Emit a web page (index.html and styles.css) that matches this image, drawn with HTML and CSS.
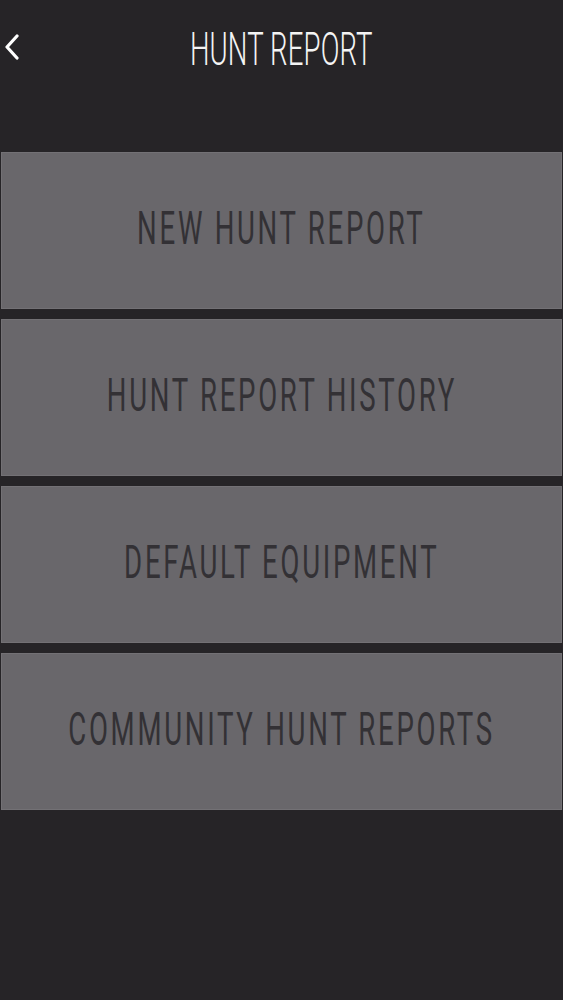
FILE: index.html
```html
<!DOCTYPE html>
<html>
<head>
<meta charset="utf-8">
<link rel="stylesheet" href="styles.css">
</head>
<body>
<div class="screen">
  <header class="topbar">
    <button class="back" aria-label="Back">
      <svg width="16" height="26" viewBox="0 0 16 26"><path d="M13 2 L3 13 L13 24" fill="none" stroke="#ffffff" stroke-width="3.2" stroke-linecap="round" stroke-linejoin="round"/></svg>
    </button>
    <h1 class="title">HUNT REPORT</h1>
  </header>
  <nav class="menu">
    <a class="item"><span class="label">NEW HUNT REPORT</span></a>
    <a class="item"><span class="label">HUNT REPORT HISTORY</span></a>
    <a class="item"><span class="label">DEFAULT EQUIPMENT</span></a>
    <a class="item"><span class="label">COMMUNITY HUNT REPORTS</span></a>
  </nav>
</div>
</body>
</html>
```
FILE: styles.css
```css
html, body {
  margin: 0;
  padding: 0;
  background: #262427;
}
.screen {
  width: 563px;
  height: 1000px;
  background: #262427;
  font-family: Roboto, "Liberation Sans", sans-serif;
}
.topbar {
  position: relative;
  height: 100px;
  display: flex;
  align-items: flex-start;
  justify-content: center;
}
.back {
  position: absolute;
  left: 4px;
  top: 34px;
  background: none;
  border: 0;
  padding: 0;
  line-height: 0;
}
.title {
  margin: 0;
  padding-top: 26px;
  color: #f4f4f4;
  font-weight: 300;
  font-size: 46px;
  line-height: 46px;
  letter-spacing: 0.2px;
  white-space: nowrap;
  transform: scaleX(0.6);
}
.menu {
  margin-top: 52px;
  padding: 0 1px;
  display: flex;
  flex-direction: column;
  gap: 10px;
}
.item {
  height: 155px;
  background: #69676b;
  border: 1px solid #737175;
  display: flex;
  align-items: center;
  justify-content: center;
}
.label {
  display: inline-block;
  white-space: nowrap;
  color: #333135;
  font-weight: 400;
  font-size: 46px;
  line-height: 46px;
  letter-spacing: 4.5px;
  margin-top: -6px;
  transform: scaleX(0.6);
}
```
